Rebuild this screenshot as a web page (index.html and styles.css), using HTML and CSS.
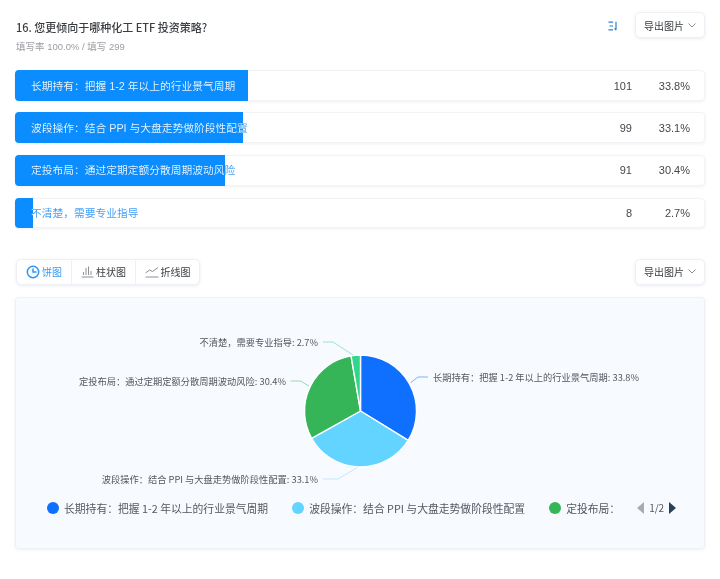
FILE: index.html
```html
<!DOCTYPE html>
<html lang="zh-CN">
<head>
<meta charset="utf-8">
<title>16. 您更倾向于哪种化工 ETF 投资策略?</title>
<link rel="stylesheet" href="styles.css">
</head>
<body>
<main class="page">
  <header class="head">
    <div class="head-text">
      <h1 class="title">16. 您更倾向于哪种化工 ETF 投资策略?</h1>
      <p class="sub">填写率 100.0% / 填写 299</p>
    </div>
    <svg class="sort-icon" width="10" height="10" viewBox="0 0 10 10" aria-hidden="true"><path d="M0.5 1.2H5M1.5 5H5M0.5 8.8H5" /><path d="M8 0.8V9M6.6 7.4L8 9" /></svg>
    <button class="export">导出图片<svg class="chev" width="8" height="5" viewBox="0 0 8 5"><path d="M0.5 0.5L4 4L7.500 0.5"/></svg></button>
  </header>

  <section class="rows">
    <div class="row">
      <div class="bar"><div class="fill" style="width:233px"></div><span class="label" style="--w:217px">长期持有&#xFF1A;把握 1-2 年以上的行业景气周期</span></div>
      <span class="count">101</span><span class="pct">33.8%</span>
    </div>
    <div class="row">
      <div class="bar"><div class="fill" style="width:228px"></div><span class="label" style="--w:212px">波段操作&#xFF1A;结合 PPI 与大盘走势做阶段性配置</span></div>
      <span class="count">99</span><span class="pct">33.1%</span>
    </div>
    <div class="row">
      <div class="bar"><div class="fill" style="width:210px"></div><span class="label" style="--w:194px">定投布局&#xFF1A;通过定期定额分散周期波动风险</span></div>
      <span class="count">91</span><span class="pct">30.4%</span>
    </div>
    <div class="row">
      <div class="bar"><div class="fill" style="width:18px"></div><span class="label" style="--w:2px">不清楚&#xFF0C;需要专业指导</span></div>
      <span class="count">8</span><span class="pct">2.7%</span>
    </div>
  </section>

  <div class="toolbar">
    <div class="tabs">
      <div class="tab active"><svg class="ico" width="14" height="14" viewBox="0 0 14 14"><circle cx="7" cy="7" r="5.7"/><path d="M7 3.500V7H10.500"/></svg>饼图</div>
      <div class="tab"><svg class="ico" width="13" height="13" viewBox="0 0 13 13"><path d="M0.500 12H12.500M2.500 10V7M5 10V3M7.500 10V1.500M10 10V6"/></svg>柱状图</div>
      <div class="tab"><svg class="ico" width="14" height="12" viewBox="0 0 14 12"><path d="M0.500 11H13.500M0.500 7L4.500 4L7.500 5.500L13 1.500"/></svg>折线图</div>
    </div>
    <button class="export">导出图片<svg class="chev" width="8" height="5" viewBox="0 0 8 5"><path d="M0.5 0.5L4 4L7.500 0.5"/></svg></button>
  </div>

  <section class="panel">
    <svg class="chart" width="690" height="192" viewBox="15 297 690 192">
      <g transform="translate(360.5 411)">
        <path class="s1" d="M0 0V-56A56 56 0 0 1 47.660 29.400Z"/>
        <path class="s2" d="M0 0L47.660 29.400A56 56 0 0 1 -48.900 27.280Z"/>
        <path class="s3" d="M0 0L-48.900 27.280A56 56 0 0 1 -9.450 -55.200Z"/>
        <path class="s4" d="M0 0L-9.450 -55.200A56 56 0 0 1 0 -56Z"/>
      </g>
      <path class="lead l1" d="M410.700 382.700L418 377H428"/>
      <path class="lead l2" d="M358 467L338 479H323"/>
      <path class="lead l3" d="M309 386L300.700 381H290.700"/>
      <path class="lead l4" d="M353 355L333 342H323"/>
      <text class="cap" x="433" y="380.500">长期持有&#xFF1A;把握 1-2 年以上的行业景气周期: 33.8%</text>
      <text class="cap end" x="318" y="482.500">波段操作&#xFF1A;结合 PPI 与大盘走势做阶段性配置: 33.1%</text>
      <text class="cap end" x="286" y="384.500">定投布局&#xFF1A;通过定期定额分散周期波动风险: 30.4%</text>
      <text class="cap end" x="318" y="345.500">不清楚&#xFF0C;需要专业指导: 2.7%</text>
    </svg>
    <div class="legend">
      <span class="item"><i class="dot d1"></i>长期持有&#xFF1A;把握 1-2 年以上的行业景气周期</span>
      <span class="item"><i class="dot d2"></i>波段操作&#xFF1A;结合 PPI 与大盘走势做阶段性配置</span>
      <span class="item short"><i class="dot d3"></i>定投布局&#xFF1A;</span>
      <span class="pager"><i class="tri left"></i><span class="pg">1/2</span><i class="tri right"></i></span>
    </div>
  </section>
</main>
</body>
</html>
```
FILE: styles.css
```css
* { box-sizing: border-box; }
html, body { margin: 0; padding: 0; background: #fff; }
body {
  font-family: "Liberation Sans", "Noto Sans CJK SC", sans-serif;
  color: #3c4043;
  font-size: 11px;
  width: 720px;
  height: 579px;
  overflow: hidden;
}
.page { padding: 12px 15px 0; filter: blur(0.4px); }
.head { display: flex; align-items: flex-start; height: 58px; }
.head-text { flex: 1; padding-top: 7px; padding-left: 1px; }
.title { margin: 0; font-family: "Noto Sans CJK SC", sans-serif; font-size: 11px; line-height: 16px; font-weight: 500; color: #3a3d42; }
.sub { margin: 5px 0 0; font-size: 9.500px; line-height: 14px; color: #9a9da3; }
.sort-icon { margin: 9px 17px 0 0; fill: none; stroke: #2f7fd8; stroke-width: 1.2; }
.export {
  width: 70px;
  height: 26px;
  padding: 0;
  display: flex;
  align-items: center;
  justify-content: center;
  gap: 4px;
  font: inherit;
  font-size: 10px;
  color: #3c4043;
  background: #fff;
  border: 1px solid #eef0f5;
  border-radius: 5px;
  box-shadow: 0 1px 3px rgba(40, 70, 120, .10);
}
.chev { fill: none; stroke: #8b8f96; stroke-width: 1; }
.rows { display: flex; flex-direction: column; gap: 11.330px; }
.row {
  display: flex;
  align-items: center;
  height: 31px;
  background: #fff;
  border: 1px solid #f1f3f7;
  border-radius: 4px;
  box-shadow: 0 1px 3px rgba(40, 70, 120, .08);
}
.row:last-child { height: 30px; margin-top: 1px; }
.bar { position: relative; flex: 1; height: 100%; display: flex; align-items: center; padding-left: 16px; margin-left: -1px; }
.label {
  position: relative;
  white-space: nowrap;
  font-size: 10.750px;
  line-height: 16px;
  color: transparent;
  background: linear-gradient(to right, #eef7ff var(--w), #3c9bf5 var(--w));
  -webkit-background-clip: text;
  background-clip: text;
}
.fill {
  position: absolute;
  top: -1px;
  bottom: -1px;
  left: 0;
  background: #0b8cff;
  border-radius: 4px 0 0 4px;
}
.count { width: 40px; text-align: right; color: #44474c; }
.pct { width: 58px; margin-right: 14px; text-align: right; color: #44474c; }
.toolbar { display: flex; justify-content: space-between; align-items: center; margin-top: 31px; }
.tabs {
  display: flex;
  margin-left: 1px;
  height: 26px;
  background: #fff;
  border: 1px solid #eef0f5;
  border-radius: 5px;
  box-shadow: 0 1px 3px rgba(40, 70, 120, .10);
}
.tab {
  display: flex;
  align-items: center;
  justify-content: center;
  gap: 2px;
  font-size: 10px;
  width: 64px;
  border-left: 1px solid #eef0f5;
  color: #3c4043;
}
.tab.active { width: 54px; border-left: 0; color: #3c9bf5; }
.ico { fill: none; stroke: #8d9095; stroke-width: 1; }
.tab.active .ico { stroke: #2a95f5; stroke-width: 1.5; }
.panel {
  margin-top: 12px;
  height: 252px;
  background: #f7faff;
  border-radius: 4px;
  box-shadow: inset 0 0 0 1px #eef1f6, 0 1px 3px rgba(40, 70, 120, .08);
  font-family: "Noto Sans CJK SC", "Liberation Sans", sans-serif;
}
.chart { display: block; }
.s1, .s2, .s3, .s4 { stroke: #fff; stroke-width: 1.4; stroke-linejoin: round; }
.s1 { fill: #0f6fff; }
.s2 { fill: #62d4ff; }
.s3 { fill: #35b558; }
.s4 { fill: #2fd68c; }
.lead { fill: none; stroke-width: 1; }
.l1 { stroke: #7fb0fa; }
.l2 { stroke: #bfeaf8; }
.l3 { stroke: #9ad8ab; }
.l4 { stroke: #98e6c4; }
.cap { font-size: 9.250px; fill: #55585d; }
.cap.end { text-anchor: end; }
.legend {
  display: flex;
  align-items: center;
  height: 16px;
  margin-top: 11px;
  padding: 0 31px 0 32px;
  gap: 24px;
  font-size: 10.800px;
  color: #55585d;
}
.item { display: flex; align-items: center; gap: 5px; white-space: nowrap; flex: none; }
.item.short { width: 64px; }
.dot { width: 12px; height: 12px; border-radius: 50%; flex: none; }
.d1 { background: #0f6fff; }
.d2 { background: #62d4ff; }
.d3 { background: #35b558; }
.pager { margin-left: auto; display: flex; align-items: center; gap: 5px; font-size: 10px; }
.tri { width: 0; height: 0; border-top: 6px solid transparent; border-bottom: 6px solid transparent; }
.tri.left { border-right: 7px solid #a8abb0; }
.tri.right { border-left: 7px solid #2b3f55; }
```
